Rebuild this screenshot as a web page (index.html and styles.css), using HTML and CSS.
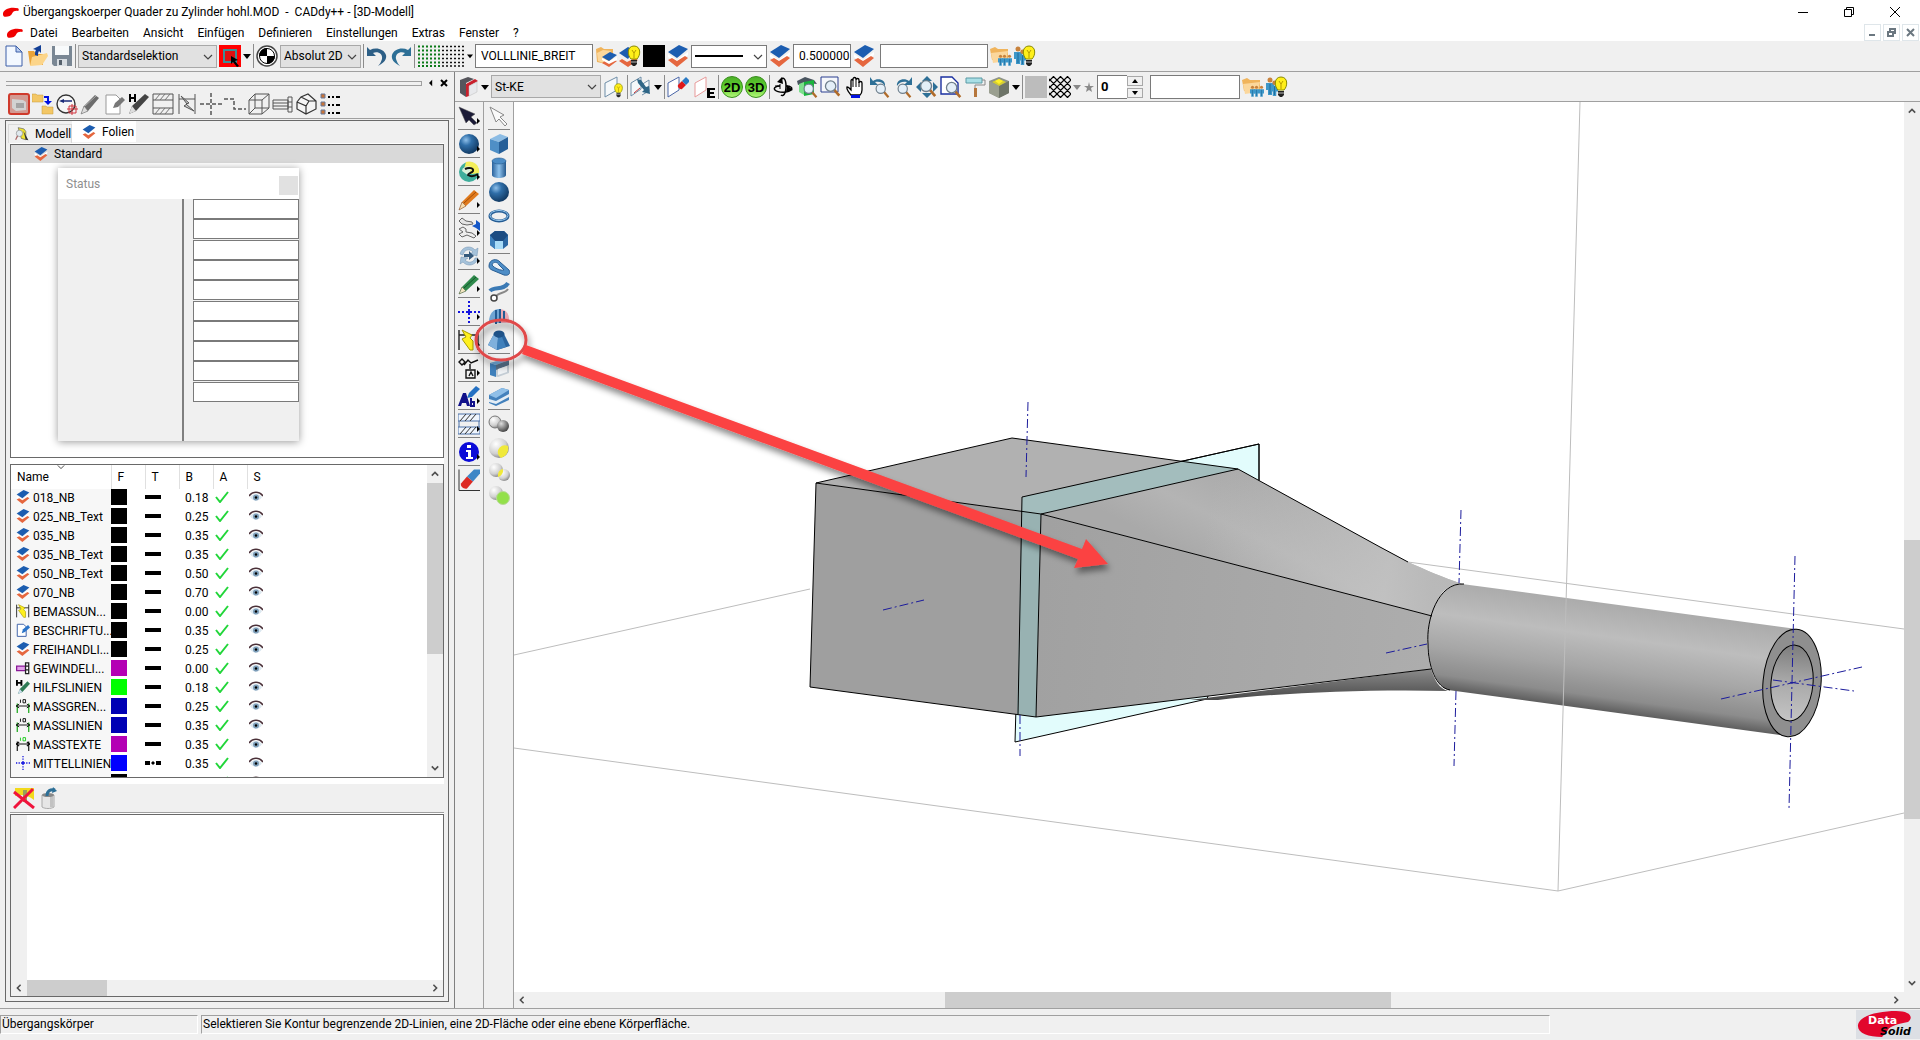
FILE: index.html
```html
<!DOCTYPE html>
<html lang="de">

<head>
    <meta charset="UTF-8">
    <meta name="viewport" content="width=device-width, initial-scale=1.0">
    <title>CADdy++ - [3D-Modell]</title>
    <link rel="stylesheet" href="styles.css">
</head>

<body>

    <!-- Symbole -->
    <svg class="symbols" aria-hidden="true">
        <defs>
            <radialGradient id="gBall" cx="0.35" cy="0.3" r="0.8">
                <stop offset="0" stop-color="#8fc0ea" /><stop offset="0.35" stop-color="#2f6ea8" /><stop offset="1" stop-color="#0c2f55" />
            </radialGradient>
            <radialGradient id="gGrey" cx="0.35" cy="0.3" r="0.8">
                <stop offset="0" stop-color="#fff" /><stop offset="0.6" stop-color="#d0d0d0" /><stop offset="1" stop-color="#777" />
            </radialGradient>
            <radialGradient id="gDark" cx="0.35" cy="0.3" r="0.8">
                <stop offset="0" stop-color="#ddd" /><stop offset="0.5" stop-color="#888" /><stop offset="1" stop-color="#333" />
            </radialGradient>
            <linearGradient id="gBlue" x1="0" x2="1" y1="0" y2="0">
                <stop offset="0" stop-color="#2a629c" /><stop offset="0.5" stop-color="#8fc3ee" /><stop offset="1" stop-color="#23578c" />
            </linearGradient>
            <linearGradient id="gGreen" x1="0" x2="0" y1="0" y2="1">
                <stop offset="0" stop-color="#4cae2a" /><stop offset="0.5" stop-color="#5fd02c" /><stop offset="1" stop-color="#b5f67c" />
            </linearGradient>
        </defs>

        <symbol id="brand" viewBox="0 0 18 12"><path d="M1 8C1 3 9 0 17 2c1 1 1 2 0 3-2-1-5 0-6 2-1 3-4 4-7 4-2 0-3-1-3-3z" fill="#f00000" /></symbol>
        <symbol id="down" viewBox="0 0 8 22"><path d="M0 9h8l-4 5z" /></symbol>
        <symbol id="chev" viewBox="0 0 10 10"><path d="M1 3l4 4 4-4" fill="none" stroke="#444" stroke-width="1.2" /></symbol>
        <symbol id="arrow" viewBox="0 0 10 10"><path d="M1 7l4-4 4 4" fill="none" stroke="#505050" stroke-width="2" /></symbol>

        <!-- Standardleiste -->
        <symbol id="new" viewBox="0 0 22 22"><path d="M3 1h10l6 6v14H3z" fill="#f3f8ff" stroke="#3c5fa8" /><path d="M13 1v6h6z" fill="#b9cdf0" stroke="#3c5fa8" /></symbol>
        <symbol id="open" viewBox="0 0 22 22"><path d="M1 6h6l2 3h7v11H3z" fill="#e8a33a" /><path d="M5 12l15-4 1 3-6 9-12 1z" fill="#fcd58a" /><path d="M8 10c0-2 0-4 1-5L6 4l8-4v8l-2-2c-1 1-1 3-1 5z" fill="#123f96" /></symbol>
        <symbol id="save" viewBox="0 0 22 22"><path d="M1 1h20v20H3l-2-2z" fill="#7a8794" /><path d="M4 1h14v9H4z" fill="#f8fafb" /><path d="M6 14h10v7H6z" fill="#d8dde2" /><path d="M8 15h3v5H8z" fill="#56616c" /></symbol>
        <symbol id="pick" viewBox="0 0 22 22"><path d="M0 0h22v22H0z" fill="#f00" /><path d="M5 5h12v12H5z" fill="#e01010" stroke="#3c8f95" stroke-width="2" /><path d="M12 11l7 4-3 1 4 5-2 1-4-5-2 2z" /></symbol>
        <symbol id="origin" viewBox="0 0 22 22"><circle cx="11" cy="11" r="10" fill="#fff" stroke="#444" stroke-width="1.5" /><circle cx="11" cy="11" r="7.500" fill="#fff" stroke="#000" /><path d="M11 3a8 8 0 0 0-8 8h16a8 8 0 0 1-8 8z" /></symbol>
        <symbol id="undo" viewBox="0 0 22 22"><path d="M1 2v9h9L7 8c5-2 10 1 9 6-1 3-2 5-4 7 6-3 9-7 8-11C18 4 10 2 4 5z" fill="#2d5f86" /></symbol>
        <symbol id="redo" viewBox="0 0 22 22"><path d="M21 2v9h-9l3-3c-5-2-10 1-9 6 1 3 2 5 4 7-6-3-9-7-8-11C4 4 12 2 18 5z" fill="#2d6f96" /></symbol>
        <symbol id="grids" viewBox="0 0 48 22"><path d="M1 1.500h23M1 5.500h23M1 9.500h23M1 13.500h23M1 17.500h23M1 21h23" stroke="#0a7a18" stroke-width="2" stroke-dasharray="2 2" /><path d="M25 1.500h22M25 5.500h22M25 9.500h22M25 13.500h22M25 17.500h22M25 21h22" stroke="#111" stroke-dasharray="2 2" stroke-width="1.500" /></symbol>
        <symbol id="layers" viewBox="0 0 22 22"><path d="M1 9l9 6L21 7v3l-11 9L1 12z" fill="#fff" /><path d="M1 15l4-2 5 3 8-5 3 2-11 9z" fill="#e5673f" /><path d="M1 7l11-7 9 4-11 9z" fill="#1c5db0" /></symbol>
        <symbol id="foldlayers" viewBox="0 0 22 22"><path d="M1 4l5-2 3 2h9v9l-7 6-9-2z" fill="#f0b45c" /><path d="M2 8l6-3 8 1-8 12-5-2z" fill="#fbd79c" /><path d="M7 18l3-2 4 2 5-3 3 1-8 6z" fill="#e5673f" /><path d="M7 13l7 3 8-4v3l-8 4-7-4z" fill="#fff" /><path d="M7 12l8-5 7 3-8 6z" fill="#1c5db0" /></symbol>
        <symbol id="bulb" viewBox="0 0 14 22"><path d="M4 14C0 10 0 1 7 1s7 9 3 13z" fill="#ffef1a" stroke="#8a8a00" /><path d="M5 5l2 3 2-3M7 8v5" fill="none" stroke="#b59a00" /><path d="M4 15h6v4l-2 2H6l-2-2z" fill="#222" /><path d="M4 17h6" stroke="#bbb" /></symbol>
        <symbol id="layerbulb" viewBox="0 0 22 22"><path d="M0 16l3-2 5 3 8-4 3 2-10 7z" fill="#e5673f" /><path d="M0 8l9-6 6 3-6 9z" fill="#1c5db0" /><use href="#bulb" x="8" width="14" height="22" /></symbol>
        <symbol id="man" viewBox="0 0 8 18"><circle cx="4" cy="3" r="2.500" fill="#c8823c" /><path d="M0 6h8v7H6v5H2v-5H0z" fill="#3d97c9" /><path d="M4 7v10" stroke="#1d6a9a" /></symbol>
        <symbol id="foldmen" viewBox="0 0 22 22"><path d="M0 4l5-2 3 2h10v11H2z" fill="#f0b45c" /><path d="M1 8l17-2-2 10-13 2z" fill="#fbd79c" /><use href="#man" x="8" y="9" width="5" height="12" /><use href="#man" x="12" y="9" width="5" height="12" /><use href="#man" x="17" y="9" width="5" height="12" /></symbol>
        <symbol id="menbulb" viewBox="0 0 22 22"><use href="#man" x="0" y="1" width="8" height="18" /><use href="#man" x="5" y="4" width="7" height="16" /><use href="#bulb" x="8" width="14" height="22" /></symbol>

        <!-- 3D-Leiste -->
        <symbol id="bookred" viewBox="0 0 22 22"><path d="M3 4l8-3 6 2-8 4v14l-6-4z" fill="#55555c" /><path d="M9 8l9-5 3 2-9 5v10l-3 1z" fill="#c9202c" /><path d="M12 10l8-4v10l-8 4z" fill="#e8e9ec" stroke="#bbb" stroke-width=".5" /></symbol>
        <symbol id="sheet" viewBox="0 0 22 22"><path d="M2 7l9-6v13l-9 7z" fill="#f5f8fa" stroke="#6f8ea8" /></symbol>
        <symbol id="sheetbulb" viewBox="0 0 22 22"><path d="M2 7l12-6v13l-12 7z" fill="#f5f8fa" stroke="#6f8ea8" /><use href="#bulb" x="10" y="7" width="11" height="15" /></symbol>
        <symbol id="sheetarrow" viewBox="0 0 22 22"><path d="M1 7l10-6v12l-10 7zM11 9l8-5v11l-7 4" fill="#f5f8fa" stroke="#6f8ea8" /><path d="M4 17l6-5" stroke="#c33" /><path d="M7 3l4 1 5 7 3-1 1 8-8-2 2-2-6-7z" fill="#2f6687" /></symbol>
        <symbol id="sheeterase" viewBox="0 0 22 22"><path d="M1 7l11-6v13l-11 7z" fill="#fff" stroke="#4a66a8" /><path d="M11 9l4-4 4 4-4 4c-2 1-5-2-4-4z" fill="#e0191b" /><path d="M15 5l4-4 3 3v2l-3 3z" fill="#2b7ac4" /></symbol>
        <symbol id="sheete" viewBox="0 0 22 22"><path d="M1 7l11-6v13l-11 7z" fill="#fff" stroke="#e89a9a" /><path d="M13 12h8v2h-5v2h4v2h-4v2h5v2h-8z" /></symbol>
        <symbol id="disc" viewBox="0 0 22 22"><circle cx="11" cy="11" r="10.500" fill="url(#gGreen)" stroke="#3a8f1f" /></symbol>
        <symbol id="orbit" viewBox="0 0 22 22"><path d="M14 10c5 0 7 2 5 4-3 3-13 3-16 0-2-2 1-4 5-4" fill="none" stroke="#000" stroke-width="1.5" /><path d="M9 4c2-4 5-1 5 6 0 8-3 11-5 9" fill="none" stroke="#000" stroke-width="1.500" /><path d="M10 1L5 6l6 2zM15 9l6 5-7 2z" /><path d="M8 10H3M8 8v5" stroke="#000" /></symbol>
        <symbol id="lens" viewBox="0 0 22 22"><path d="M14 14l6 7" stroke="#b06b2a" stroke-width="3" /><circle cx="10" cy="10" r="6" fill="#e4eff8" stroke="#6f7f8c" stroke-width="1.5" /></symbol>
        <symbol id="houselens" viewBox="0 0 22 22"><path d="M1 5l8-4 9 3 3 4-11-1-8 2z" fill="#4a5560" /><path d="M3 8l5-2v13l-5-3z" fill="#7de08c" /><path d="M8 6l10-2v14l-10 2z" fill="#18b43c" /><use href="#lens" x="5" y="5" width="17" height="17" /></symbol>
        <symbol id="winlens" viewBox="0 0 22 22"><path d="M1 1h17v15H1z" fill="#f5f7fb" stroke="#2a3e90" /><use href="#lens" x="2" y="1" width="19" height="20" /></symbol>
        <symbol id="hand" viewBox="0 0 22 22"><path d="M7 19C4 15 2 13 3 11c2 0 2 1 4 3V5c0-2 2-2 2 0V3c0-2 3-2 3 0v1c0-2 3-2 3 0v3c0-2 3-2 3 0v7c0 3-1 4-2 5z" fill="#fff" stroke="#000" stroke-width="1.3" /><path d="M9 5v6M12 4v7M15 6v5" stroke="#000" /><path d="M7 19h9v3H7z" fill="#0010e0" /></symbol>
        <symbol id="lensback" viewBox="0 0 22 22"><use href="#lens" x="5" y="5" width="17" height="17" /><path d="M2 1v8h8L7 6c4-1 8 0 10 4 1-6-7-9-12-5z" fill="#2d6f96" /></symbol>
        <symbol id="lensfwd" viewBox="0 0 22 22"><use href="#lens" x="3" y="5" width="17" height="17" /><path d="M20 1v8h-8l3-3c-4-1-8 0-10 4C4 4 12 1 17 5z" fill="#2d6f96" /></symbol>
        <symbol id="lensall" viewBox="0 0 22 22"><path d="M6 5l5-5 5 5zM6 17l5 5 5-5zM5 6l-5 5 5 5zM17 6l5 5-5 5z" fill="#2d6f96" /><use href="#lens" x="1" y="1" width="20" height="20" /></symbol>
        <symbol id="pagelens" viewBox="0 0 22 22"><path d="M1 1h11l6 6v11H1z" fill="#fff" stroke="#1a2fa0" stroke-width="1.4" /><use href="#lens" x="3" y="3" width="19" height="19" /></symbol>
        <symbol id="roller" viewBox="0 0 22 22"><path d="M2 2h16v5H2z" fill="#a9dfe6" stroke="#5a9aa5" /><path d="M18 4h3v5H11v4" fill="none" stroke="#888" /><path d="M10 12h3v9h-3z" fill="#b5763c" /></symbol>
        <symbol id="cubegold" viewBox="0 0 22 22"><path d="M1 5l10-4 10 4v12l-10 5-10-5z" fill="#8f9488" /><path d="M11 10l10-5v12l-10 5z" fill="#6e7468" /><path d="M4 6l7-3 7 3-7 4z" fill="#d6cf30" /><path d="M7 5l4-2 4 2-4 3z" fill="#fff22a" /><path d="M1 5l10 5v12L1 17z" fill="#9a9f90" /></symbol>
        <symbol id="hatch" viewBox="0 0 22 22"><path d="M0 5l5-5M0 12L12 0M0 19L19 0M4 22L22 4M11 22l11-11M18 22l4-4M0 17l5 5M0 10l12 12M0 3l19 19M4 0l18 18M11 0l11 11M18 0l4 4" stroke="#000" stroke-width="1.2" /></symbol>
        <symbol id="star" viewBox="0 0 12 22"><path d="M6 6l1 4h4l-3 2 1 4-3-2-3 2 1-4-3-2h4z" fill="#8a8a8a" /></symbol>

        <!-- Filterleiste -->
        <symbol id="fview" viewBox="0 0 22 22"><rect x="1" y="1" width="20" height="20" rx="2" fill="#d39a92" stroke="#cf3a2c" stroke-width="2" /><path d="M4 6l11 1 3 2v8l-10 1-4-3z" fill="#d2d2d2" /><path d="M8 10h8v5H8z" fill="#a4a4a4" /></symbol>
        <symbol id="ffolder" viewBox="0 0 22 22"><path d="M0 1h4l1 1h6v7H0z" fill="#f3c766" stroke="#c79a3a" stroke-width=".5" /><path d="M10 13h4l1 1h6v7H10z" fill="#f3c766" stroke="#c79a3a" stroke-width=".5" /><path d="M12 4h4v6" fill="none" stroke="#0010e0" stroke-width="2" /><path d="M12 8l4 4 4-4z" fill="#0010e0" /></symbol>
        <symbol id="fcircle" viewBox="0 0 22 22"><circle cx="10" cy="11" r="9" fill="#f7f7f7" stroke="#333" stroke-width="1.400" /><path d="M6 8h10" stroke="#1b2a78" stroke-width="1.500" /><path d="M3 8l5-2v4z" fill="#1b2a78" /><path d="M13 13h7v7h-7zM16 11v11M11 16h11" fill="none" stroke="#d0323c" /></symbol>
        <symbol id="fpencil" viewBox="0 0 22 22"><path d="M1 21l3-8L15 2l4 3L8 18z" fill="#6c6c6c" /><path d="M1 21l3-8 4 5z" fill="#ddd" stroke="#777" stroke-width=".6" /><path d="M5 13L16 3" stroke="#aaa" /></symbol>
        <symbol id="fnote" viewBox="0 0 22 22"><path d="M2 2h10l4 4v15H2z" fill="#fff" stroke="#999" /><path d="M9 15l2-5 7-6 3 3-7 7z" fill="#777" /></symbol>
        <symbol id="fhelp" viewBox="0 0 22 22"><path d="M1 21l3-8L17 1l4 3L8 18z" fill="#444" /><path d="M1 21l3-8 4 5z" fill="#ddd" /><path d="M1 1h2v3h3V1h2v8H6V6H3v3H1z" /></symbol>
        <symbol id="fhatch" viewBox="0 0 22 22"><path d="M1 1h20v6H1zM1 15h20v6H1zM1 7v8M21 7v8" fill="none" stroke="#555" /><path d="M3 7l5-6M8 7l5-6M13 7l5-6M3 21l5-6M8 21l5-6M13 21l5-6" stroke="#777" /></symbol>
        <symbol id="fdim" viewBox="0 0 22 22"><path d="M3 1v20M19 1v20M3 6h16" stroke="#555" /><path d="M5 3l8 7-3 1 8 7-10-5 3-2z" fill="#ccc" stroke="#555" /></symbol>
        <symbol id="faxis" viewBox="0 0 22 22"><path d="M11 0v22M0 11h22" stroke="#555" stroke-width="1.500" stroke-dasharray="4 2" /></symbol>
        <symbol id="fstep" viewBox="0 0 22 22"><path d="M0 6h10v10h12" fill="none" stroke="#555" stroke-width="1.500" stroke-dasharray="4 2" /></symbol>
        <symbol id="fwire" viewBox="0 0 22 22"><path d="M1 7h13v14H1zM7 1h14v14H7zM1 7l6-6M14 7l7-6M14 21l7-6M1 21l6-6" fill="none" stroke="#555" /></symbol>
        <symbol id="fbolt" viewBox="0 0 22 22"><path d="M1 7h15v9H1zM1 10h15M1 13h15M16 4h4v15h-4zM16 9h4M16 14h4" fill="none" stroke="#555" /></symbol>
        <symbol id="fprism" viewBox="0 0 22 22"><path d="M1 9l4-5 7-3 8 7v8l-10 5-9-5zM1 9l9 4v8M10 13l3-5 7 0M5 4l8 4" fill="#f4f4f4" stroke="#333" stroke-width="1.200" /></symbol>
        <symbol id="flist" viewBox="0 0 22 22"><path d="M1 1h4v4H1zM1 9h4v4H1zM1 17h4v4H1z" fill="#c87437" stroke="#66789a" /><path d="M8 4h14M8 12h14M8 20h14" stroke="#000" stroke-width="2" stroke-dasharray="2 2 2 2 4 2" /></symbol>

        <!-- Werkzeuge links -->
        <symbol id="tick" viewBox="0 0 22 22"><path d="M19 13l3 3-3 3z" /></symbol>
        <symbol id="cursor" viewBox="0 0 22 22"><path d="M1 2l16 7-4 3 6 6-3 2-5-5-3 3z" fill="#1c1c38" stroke="#555" stroke-width=".5" /></symbol>
        <symbol id="cursorw" viewBox="0 0 22 22"><path d="M2 2l14 8-4 2 7 7-2 2-6-7-3 3z" fill="#fafafa" stroke="#888" /></symbol>
        <symbol id="ball" viewBox="0 0 22 22"><circle cx="11" cy="11" r="10" fill="url(#gBall)" /></symbol>
        <symbol id="ring" viewBox="0 0 22 22"><circle cx="11" cy="11" r="10" fill="#3fae9c" /><path d="M8 1a10 10 0 0 1 13 11l-7 1L6 8z" fill="#f4ee5a" /><path d="M4 10a6 5 0 0 1 9-4l-2 9z" fill="#d8f0da" /><path d="M7 8c4-2 9-1 8 2-1 2-5 2-5 4 3 2 7 1 10-1" fill="none" stroke="#111" stroke-width="2" /></symbol>
        <symbol id="pencilo" viewBox="0 0 22 22"><path d="M1 21l3-8L16 1l5 4L8 17z" fill="#e07a1d" /><path d="M1 21l3-8 4 4z" fill="#f6dcae" stroke="#853" stroke-width=".6" /><path d="M6 14L18 3" stroke="#a34e06" /></symbol>
        <symbol id="tools" viewBox="0 0 22 22"><path d="M1 4l3-3 4 3 6 1 1 2-6 1-5-1z" fill="#e4e4e4" stroke="#666" /><path d="M1 12l4-2 3 2v3l6 1 4 3-2 2-7-3-5 2-3-3 4-2z" fill="#eee" stroke="#666" /><path d="M14 9l4-2v-4l4 3v8l-4-3z" fill="#1658c8" /></symbol>
        <symbol id="rotate" viewBox="0 0 22 22"><path d="M2 9C4 1 13 0 17 5l3-2-1 8-7-2 3-2C11 3 6 5 5 10zM20 13c-2 8-11 9-15 4l-3 2 1-7 7 1-3 2c4 4 9 2 10-2z" fill="#a5c2da" stroke="#6f8fae" stroke-width=".5" /><path d="M6 9h5V6l5 5-5 4v-3H6z" fill="#34597c" /></symbol>
        <symbol id="pencilg" viewBox="0 0 22 22"><path d="M1 21l3-7L16 2l5 4L8 18z" fill="#2f8a4c" /><path d="M1 21l3-7 4 4z" fill="#f2e4c0" stroke="#564" stroke-width=".6" /><path d="M6 15L18 4" stroke="#14572c" /></symbol>
        <symbol id="axis" viewBox="0 0 22 22"><path d="M11 0v22M0 11h22" stroke="#1414e0" stroke-width="2" stroke-dasharray="2 2" /><path d="M9 11h4M11 9v4" stroke="#1414e0" stroke-width="2" /></symbol>
        <symbol id="dim" viewBox="0 0 22 22"><path d="M1 1v20M20 1v20M1 6h19" stroke="#222" stroke-width="1.400" /><path d="M4 1l10 5-2 3 3 3v9h-3L4 10l4-2z" fill="#fff01e" stroke="#a89a00" /></symbol>
        <symbol id="weld" viewBox="0 0 22 22"><path d="M1 5l3-3 3 3-3 3zM6 8l4-5 3 3 7-3M12 7v5M8 13h9v8H8zM11 19l2-4 2 4" fill="none" stroke="#111" stroke-width="1.400" /></symbol>
        <symbol id="text" viewBox="0 0 22 22"><path d="M0 21L5 8h3l4 13H9l-1-3H4l-1 3z" fill="#10108a" /><path d="M13 13v8h3v-4h-3" fill="none" stroke="#10108a" stroke-width="2" /><path d="M9 13l2-5 7-7 4 3-8 8z" fill="#2470c2" /></symbol>
        <symbol id="hatchb" viewBox="0 0 22 22"><path d="M0 1h22v7H0zM0 14h22v7H0zM1 8v6M21 8v6" fill="#eef4fc" stroke="#4a70a8" /><path d="M2 8l6-7M7 8l6-7M12 8l6-7M2 21l6-7M7 21l6-7M12 21l6-7" stroke="#333" /></symbol>
        <symbol id="info" viewBox="0 0 22 22"><circle cx="11" cy="11" r="10" fill="#0a0ad8" /><path d="M9 4h4v3H9zM8 9h5v7h2v2H8v-2h2v-5H8z" fill="#fff" /></symbol>
        <symbol id="eraser" viewBox="0 0 22 22"><path d="M1 0v21h21" fill="none" stroke="#333" /><path d="M3 14l6-7 6 5-6 7c-3 1-7-2-6-5z" fill="#dd2a22" /><path d="M9 7l7-7h6v4l-7 8z" fill="#3d86c6" /></symbol>

        <!-- Werkzeuge rechts -->
        <symbol id="cube" viewBox="0 0 22 22"><path d="M2 6l10-5 8 3-9 5z" fill="#8cbce4" /><path d="M2 6l9 3v12l-9-4z" fill="#4f8fc6" /><path d="M11 9l9-5v12l-9 5z" fill="#265f98" /></symbol>
        <symbol id="cyl" viewBox="0 0 22 22"><path d="M4 4v14c0 4 14 4 14 0V4z" fill="url(#gBlue)" /><ellipse cx="11" cy="4" rx="7" ry="3" fill="#4b8cc6" stroke="#235a90" stroke-width=".6" /></symbol>
        <symbol id="torus" viewBox="0 0 22 22"><ellipse cx="11" cy="11" rx="9" ry="5" fill="none" stroke="#245c94" stroke-width="3" /><ellipse cx="11" cy="10.500" rx="9" ry="5" fill="none" stroke="#9cccf0" stroke-width="1" /></symbol>
        <symbol id="hexa" viewBox="0 0 22 22"><path d="M2 6l5-4h9l4 4v10l-5 4H7l-5-4z" fill="#2c68a4" /><path d="M2 6l5 5v9l-5-4z" fill="#3d7fbb" /><path d="M7 12h8v8H7z" fill="#a9dcf8" /><path d="M2 6l5-4h9l4 4-5 6H7z" fill="#1c4c82" /></symbol>
        <symbol id="sweep" viewBox="0 0 22 22"><path d="M1 9c0-7 8-8 11-4l9 8c2 4-1 6-5 5L4 13c-2-1-3-2-3-4z" fill="#4d8dc7" stroke="#2a5f94" /><path d="M4 8c1-4 6-3 7 0l5 5c-3 1-10-2-12-5z" fill="#eef3f8" stroke="#2a5f94" /></symbol>
        <symbol id="pipe" viewBox="0 0 22 22"><path d="M2 10c4-5 14 0 18-8" fill="none" stroke="#3b7ab5" stroke-width="4" /><path d="M8 16c1-5 9-3 12-8" fill="none" stroke="#888" stroke-width="2" /><circle cx="6" cy="17" r="3" fill="#fff" stroke="#444" stroke-width="1.500" /></symbol>
        <symbol id="cut" viewBox="0 0 22 22"><path d="M1 17c0-9 5-13 10-13v14z" fill="#6fa5d4" /><path d="M11 4c6 0 10 4 10 10v4H11z" fill="#e9a9b4" /><path d="M8 5v14M12 4v14M16 6v8" stroke="#245c94" stroke-width="2" /></symbol>
        <symbol id="loft" viewBox="0 0 22 22"><path d="M6 5L0 16l9 5 13-4-6-12z" fill="#2b659e" /><path d="M6 5L0 16l9 5 1-12z" fill="#7fb0dc" /><path d="M10 9l-1 12 9-3-4-10z" fill="#3f80bb" /><ellipse cx="11" cy="5" rx="5.500" ry="3.500" fill="#1f5389" /></symbol>
        <symbol id="shell" viewBox="0 0 22 22"><path d="M2 6l14-4 5 1v13l-11 4-8-2z" fill="#c4cdd5" /><path d="M2 6l6 2v12l-6-2z" fill="#3f80bb" /><path d="M2 6l14-4 5 1-13 5z" fill="#6fa7d6" /><path d="M8 8l13-5v5L8 13z" fill="#56708a" /><path d="M10 18V12l9-3v6z" fill="#f0f3f6" /></symbol>
        <symbol id="slab" viewBox="0 0 22 22"><path d="M1 10L14 3l7 2v10L8 21l-7-3z" fill="#4381bc" /><path d="M1 10L14 3l7 2L8 13z" fill="#8fbfe8" /><path d="M1 14l7 2 13-7v3L8 19l-7-2z" fill="#e4edf5" /></symbol>
        <symbol id="union" viewBox="0 0 22 22"><circle cx="7" cy="9" r="6" fill="url(#gGrey)" stroke="#777" /><circle cx="15" cy="13" r="6" fill="url(#gDark)" /></symbol>
        <symbol id="minus" viewBox="0 0 22 22"><circle cx="11" cy="11" r="10" fill="url(#gGrey)" /><path d="M11 19a7 7 0 0 1 9-10 10 10 0 0 1-7 12z" fill="#f0e93a" /></symbol>
        <symbol id="inter" viewBox="0 0 22 22"><circle cx="8" cy="9" r="7" fill="url(#gGrey)" /><circle cx="16" cy="14" r="6" fill="url(#gGrey)" /><path d="M10 14a6 6 0 0 1 5-6 7 7 0 0 1-5 8z" fill="#f0e93a" /></symbol>
        <symbol id="add" viewBox="0 0 22 22"><circle cx="8" cy="8" r="7" fill="url(#gGrey)" /><circle cx="15" cy="13" r="6.500" fill="#93e04a" stroke="#b9d99a" /></symbol>

        <!-- Folien -->
        <symbol id="lnote" viewBox="0 0 22 22"><path d="M2 2h10l4 4v15H2z" fill="#fff" stroke="#3c5fa8" stroke-width="1.500" /><path d="M9 16l2-6 8-7 3 4-8 7z" fill="#2c74c8" /></symbol>
        <symbol id="lbolt" viewBox="0 0 22 22"><path d="M1 8h14v7H1z" fill="#e3a0ea" stroke="#8a1a98" stroke-width="2" /><path d="M15 3h5v17h-5zM15 8h5M15 14h5" fill="#fff" stroke="#222" stroke-width="2" /></symbol>
        <symbol id="lhelp" viewBox="0 0 22 22"><path d="M3 22l3-8L18 2l4 4-12 13z" fill="#2f7a55" /><path d="M3 22l3-8 4 5z" fill="#cde" /><path d="M0 0h3v3h4V0h3v9H7V6H3v3H0z" /></symbol>
        <symbol id="lmass" viewBox="0 0 22 22"><path d="M2 7v15M20 7v15" stroke="#2a2" stroke-width="2" /><path d="M5 8l-5 3 5 3M17 8l5 3-5 3M2 11h18" fill="none" stroke="#111" stroke-width="1.500" /><path d="M7 1v5M11 1v5h4V1z" fill="none" stroke="#111" stroke-width="1.500" /></symbol>
        <symbol id="lmasst" viewBox="0 0 22 22"><path d="M2 7v15M20 7v15M2 11h18M5 8l-5 3 5 3M17 8l5 3-5 3" fill="none" stroke="#111" stroke-width="1.800" /><path d="M7 1v5M11 1v5h4V1z" fill="none" stroke="#2c2" stroke-width="1.500" /></symbol>
        <symbol id="model" viewBox="0 0 22 22"><path d="M5 1l9 2 3 4v13l-7-2z" fill="#f1e430" stroke="#555" /><path d="M13 6l4 14 4 1-2-4z" fill="#333" /><circle cx="7" cy="10" r="5" fill="#dfe8ee" stroke="#888" /><path d="M4 14l-3 6" stroke="#a66" stroke-width="2" /></symbol>
        <symbol id="solid" viewBox="0 0 16 4"><path d="M0 0h16v4H0z" /></symbol>
        <symbol id="dashdot" viewBox="0 0 16 4"><path d="M0 0h5v4H0zM6 2l2-2 2 2-2 2zM11 0h5v4h-5z" /></symbol>
        <symbol id="check" viewBox="0 0 14 12"><path d="M1 6l4 5 8-10" fill="none" stroke="#22d63a" stroke-width="2" /></symbol>
        <symbol id="eye" viewBox="0 0 14 12"><path d="M1 6c3-4 9-4 12 0-3 5-9 5-12 0z" fill="#dce8f0" /><circle cx="7" cy="6.500" r="3" fill="#7c9db8" /><circle cx="7" cy="6.500" r="1.200" /><path d="M0 5c4-5 10-5 14 0" fill="none" stroke="#4a3038" stroke-width="1.600" /></symbol>
        <symbol id="frame" viewBox="0 0 22 22"><path d="M1 1h20v20H1z" fill="#eee" stroke="#444" stroke-width="2" /></symbol>
        <symbol id="purge" viewBox="0 0 22 22"><path d="M2 1h19v12c-6-5-13-6-19-4z" fill="#f2d91c" /><path d="M10 3h4v12h-4z" fill="#98a05a" /><path d="M1 5l20 16M20 2L1 21" stroke="#f0143c" stroke-width="3" /></symbol>
        <symbol id="bin" viewBox="0 0 22 22"><path d="M3 8h12v12c-3 2-9 2-12 0z" fill="#e6e6e6" stroke="#aaa" /><path d="M11 9h3v11h-3z" fill="#c2c2c2" /><ellipse cx="9" cy="8" rx="6" ry="2" fill="#888" /><path d="M8 9c0-5 3-7 8-6" fill="none" stroke="#2d6f96" stroke-width="3" /><path d="M14 0l4 4-5 2z" fill="#2d6f96" /></symbol>
    </svg>

    <!-- Titelleiste -->
    <header class="titlebar">
        <svg class="brand"><use href="#brand" /></svg>
        <h1>Übergangskoerper Quader zu Zylinder hohl.MOD &nbsp;-&nbsp; CADdy++ - [3D-Modell]</h1>
        <div class="window-buttons">
            <button aria-label="Minimieren"><svg viewBox="0 0 12 12"><path d="M1 6.500h10" /></svg></button>
            <button aria-label="Verkleinern"><svg viewBox="0 0 12 12"><path d="M1.500 3.500h7v7h-7zM3.500 3.500v-2h7v7h-2" /></svg></button>
            <button aria-label="Schließen"><svg viewBox="0 0 12 12"><path d="M1 1l10 10M11 1L1 11" /></svg></button>
        </div>
    </header>

    <!-- Menü -->
    <nav class="menubar">
        <svg class="brand"><use href="#brand" /></svg>
        <a href="#">Datei</a>
        <a href="#">Bearbeiten</a>
        <a href="#">Ansicht</a>
        <a href="#">Einfügen</a>
        <a href="#">Definieren</a>
        <a href="#">Einstellungen</a>
        <a href="#">Extras</a>
        <a href="#">Fenster</a>
        <a href="#">?</a>
        <div class="mdi-buttons">
            <button aria-label="Dokument minimieren"><svg viewBox="0 0 9 9"><path d="M1 7h6" /></svg></button>
            <button aria-label="Dokument verkleinern"><svg viewBox="0 0 9 9"><path d="M1 4h5v4H1zM3 4V1h5v4H6" /></svg></button>
            <button aria-label="Dokument schließen"><svg viewBox="0 0 9 9"><path d="M1 1l7 7M8 1L1 8" /></svg></button>
        </div>
    </nav>

    <!-- Standardleiste -->
    <div class="toolbar">
        <button class="tool" aria-label="Neu"><svg><use href="#new" /></svg></button>
        <button class="tool" aria-label="Öffnen"><svg><use href="#open" /></svg></button>
        <button class="tool" aria-label="Speichern"><svg><use href="#save" /></svg></button>
        <span class="sep"></span>
        <span class="combo selection"><select aria-label="Selektion"><option>Standardselektion</option></select><svg><use href="#chev" /></svg></span>
        <button class="tool" aria-label="Auswahl"><svg><use href="#pick" /></svg></button>
        <button class="drop" aria-label="Auswahl Optionen"><svg><use href="#down" /></svg></button>
        <span class="sep"></span>
        <button class="tool" aria-label="Ursprung"><svg><use href="#origin" /></svg></button>
        <span class="combo coords"><select aria-label="Koordinaten"><option>Absolut 2D</option></select><svg><use href="#chev" /></svg></span>
        <span class="sep"></span>
        <button class="tool" aria-label="Rückgängig"><svg><use href="#undo" /></svg></button>
        <button class="tool" aria-label="Wiederherstellen"><svg><use href="#redo" /></svg></button>
        <span class="sep"></span>
        <button class="tool wide" aria-label="Raster"><svg><use href="#grids" /></svg></button>
        <button class="drop small" aria-label="Raster Optionen"><svg><use href="#down" /></svg></button>
        <input class="field layer-name" type="text" value="VOLLLINIE_BREIT" aria-label="Folie">
        <button class="tool" aria-label="Folie wählen"><svg><use href="#foldlayers" /></svg></button>
        <button class="tool" aria-label="Folie anzeigen"><svg><use href="#layerbulb" /></svg></button>
        <button class="tool black" aria-label="Farbe"></button>
        <button class="tool" aria-label="Farbe aus Folie"><svg><use href="#layers" /></svg></button>
        <span class="combo line-type"><select aria-label="Linientyp"><option></option></select><i></i><svg><use href="#chev" /></svg></span>
        <button class="tool" aria-label="Linientyp aus Folie"><svg><use href="#layers" /></svg></button>
        <input class="field line-width" type="text" value="0.500000" aria-label="Linienbreite">
        <button class="tool" aria-label="Breite aus Folie"><svg><use href="#layers" /></svg></button>
        <input class="field group spaced" type="text" aria-label="Gruppe">
        <button class="tool" aria-label="Gruppe wählen"><svg><use href="#foldmen" /></svg></button>
        <button class="tool" aria-label="Gruppe anzeigen"><svg><use href="#menbulb" /></svg></button>
    </div>

    <div class="workspace">

        <!-- Linkes Panel -->
        <aside class="side">
            <div class="grip">
                <span></span>
                <button aria-label="Andocken"><svg class="dock" viewBox="0 0 5 8"><path d="M4 0v8L0 4z" /></svg></button>
                <button aria-label="Panel schließen"><svg viewBox="0 0 8 8"><path d="M1 1l6 6M7 1L1 7" stroke="#000" stroke-width="2" /></svg></button>
            </div>
            <div class="filters">
                <button class="tool" aria-label="Ansichten"><svg><use href="#fview" /></svg></button>
                <button class="tool" aria-label="Ordner"><svg><use href="#ffolder" /></svg></button>
                <button class="tool" aria-label="Kreise"><svg><use href="#fcircle" /></svg></button>
                <button class="tool" aria-label="Linien"><svg><use href="#fpencil" /></svg></button>
                <button class="tool" aria-label="Notizen"><svg><use href="#fnote" /></svg></button>
                <button class="tool" aria-label="Hilfslinien"><svg><use href="#fhelp" /></svg></button>
                <button class="tool" aria-label="Schraffuren"><svg><use href="#fhatch" /></svg></button>
                <button class="tool" aria-label="Bemaßungen"><svg><use href="#fdim" /></svg></button>
                <button class="tool" aria-label="Mittellinien"><svg><use href="#faxis" /></svg></button>
                <button class="tool" aria-label="Schnittverlauf"><svg><use href="#fstep" /></svg></button>
                <button class="tool" aria-label="Drahtmodell"><svg><use href="#fwire" /></svg></button>
                <button class="tool" aria-label="Normteile"><svg><use href="#fbolt" /></svg></button>
                <button class="tool" aria-label="Körper"><svg><use href="#fprism" /></svg></button>
                <button class="tool" aria-label="Liste"><svg><use href="#flist" /></svg></button>
            </div>

            <div class="panel">
                <div class="tabs">
                    <button class="tab"><svg><use href="#model" /></svg>Modell</button>
                    <button class="tab active"><svg><use href="#layers" /></svg>Folien</button>
                </div>

                <div class="panes">
                    <div class="tree">
                        <div class="tree-item"><svg><use href="#layers" /></svg>Standard</div>

                        <!-- Schwebendes Statusfenster -->
                        <div class="status-window">
                            <div class="status-title">Status<button aria-label="Status schließen"></button></div>
                            <div class="status-body">
                                <div class="status-names"></div>
                                <div class="status-values">
                                    <input type="text" aria-label="Wert 1">
                                    <input type="text" aria-label="Wert 2">
                                    <input type="text" aria-label="Wert 3">
                                    <input type="text" aria-label="Wert 4">
                                    <input type="text" aria-label="Wert 5">
                                    <input type="text" aria-label="Wert 6">
                                    <input type="text" aria-label="Wert 7">
                                    <input type="text" aria-label="Wert 8">
                                    <input type="text" aria-label="Wert 9">
                                    <input type="text" aria-label="Wert 10">
                                </div>
                            </div>
                        </div>
                    </div>

                    <div class="layer-list">
                        <div class="layer-scroll">
                            <table>
                                <thead>
                                    <tr><th class="name">Name<svg><use href="#chev" /></svg></th><th>F</th><th>T</th><th>B</th><th>A</th><th>S</th></tr>
                                </thead>
                                <tbody>
                                    <tr><td><svg class="ico"><use href="#layers" /></svg>018_NB</td><td class="black"></td><td><svg class="ln"><use href="#solid" /></svg></td><td>0.18</td><td><svg class="st"><use href="#check" /></svg></td><td><svg class="st"><use href="#eye" /></svg></td></tr>
                                    <tr><td><svg class="ico"><use href="#layers" /></svg>025_NB_Text</td><td class="black"></td><td><svg class="ln"><use href="#solid" /></svg></td><td>0.25</td><td><svg class="st"><use href="#check" /></svg></td><td><svg class="st"><use href="#eye" /></svg></td></tr>
                                    <tr><td><svg class="ico"><use href="#layers" /></svg>035_NB</td><td class="black"></td><td><svg class="ln"><use href="#solid" /></svg></td><td>0.35</td><td><svg class="st"><use href="#check" /></svg></td><td><svg class="st"><use href="#eye" /></svg></td></tr>
                                    <tr><td><svg class="ico"><use href="#layers" /></svg>035_NB_Text</td><td class="black"></td><td><svg class="ln"><use href="#solid" /></svg></td><td>0.35</td><td><svg class="st"><use href="#check" /></svg></td><td><svg class="st"><use href="#eye" /></svg></td></tr>
                                    <tr><td><svg class="ico"><use href="#layers" /></svg>050_NB_Text</td><td class="black"></td><td><svg class="ln"><use href="#solid" /></svg></td><td>0.50</td><td><svg class="st"><use href="#check" /></svg></td><td><svg class="st"><use href="#eye" /></svg></td></tr>
                                    <tr><td><svg class="ico"><use href="#layers" /></svg>070_NB</td><td class="black"></td><td><svg class="ln"><use href="#solid" /></svg></td><td>0.70</td><td><svg class="st"><use href="#check" /></svg></td><td><svg class="st"><use href="#eye" /></svg></td></tr>
                                    <tr><td><svg class="ico"><use href="#dim" /></svg>BEMASSUN...</td><td class="black"></td><td><svg class="ln"><use href="#solid" /></svg></td><td>0.00</td><td><svg class="st"><use href="#check" /></svg></td><td><svg class="st"><use href="#eye" /></svg></td></tr>
                                    <tr><td><svg class="ico"><use href="#lnote" /></svg>BESCHRIFTU...</td><td class="black"></td><td><svg class="ln"><use href="#solid" /></svg></td><td>0.35</td><td><svg class="st"><use href="#check" /></svg></td><td><svg class="st"><use href="#eye" /></svg></td></tr>
                                    <tr><td><svg class="ico"><use href="#layers" /></svg>FREIHANDLI...</td><td class="black"></td><td><svg class="ln"><use href="#solid" /></svg></td><td>0.25</td><td><svg class="st"><use href="#check" /></svg></td><td><svg class="st"><use href="#eye" /></svg></td></tr>
                                    <tr><td><svg class="ico"><use href="#lbolt" /></svg>GEWINDELI...</td><td class="purple"></td><td><svg class="ln"><use href="#solid" /></svg></td><td>0.00</td><td><svg class="st"><use href="#check" /></svg></td><td><svg class="st"><use href="#eye" /></svg></td></tr>
                                    <tr><td><svg class="ico"><use href="#lhelp" /></svg>HILFSLINIEN</td><td class="green"></td><td><svg class="ln"><use href="#solid" /></svg></td><td>0.18</td><td><svg class="st"><use href="#check" /></svg></td><td><svg class="st"><use href="#eye" /></svg></td></tr>
                                    <tr><td><svg class="ico"><use href="#lmass" /></svg>MASSGREN...</td><td class="navy"></td><td><svg class="ln"><use href="#solid" /></svg></td><td>0.25</td><td><svg class="st"><use href="#check" /></svg></td><td><svg class="st"><use href="#eye" /></svg></td></tr>
                                    <tr><td><svg class="ico"><use href="#lmass" /></svg>MASSLINIEN</td><td class="navy"></td><td><svg class="ln"><use href="#solid" /></svg></td><td>0.35</td><td><svg class="st"><use href="#check" /></svg></td><td><svg class="st"><use href="#eye" /></svg></td></tr>
                                    <tr><td><svg class="ico"><use href="#lmasst" /></svg>MASSTEXTE</td><td class="purple"></td><td><svg class="ln"><use href="#solid" /></svg></td><td>0.35</td><td><svg class="st"><use href="#check" /></svg></td><td><svg class="st"><use href="#eye" /></svg></td></tr>
                                    <tr><td><svg class="ico"><use href="#axis" /></svg>MITTELLINIEN</td><td class="blue"></td><td><svg class="ln"><use href="#dashdot" /></svg></td><td>0.35</td><td><svg class="st"><use href="#check" /></svg></td><td><svg class="st"><use href="#eye" /></svg></td></tr>
                                    <tr><td><svg class="ico"><use href="#frame" /></svg></td><td class="black"></td><td></td><td></td><td><svg class="st"><use href="#check" /></svg></td><td><svg class="st"><use href="#eye" /></svg></td></tr>
                                </tbody>
                            </table>
                        </div>
                        <div class="vscroll">
                            <svg><use href="#arrow" /></svg>
                            <div class="track"><div class="thumb"></div></div>
                            <svg class="flip"><use href="#arrow" /></svg>
                        </div>
                    </div>

                    <div class="mini-bar">
                        <button class="tool" aria-label="Filter löschen"><svg><use href="#purge" /></svg></button>
                        <button class="tool" aria-label="Papierkorb"><svg><use href="#bin" /></svg></button>
                    </div>

                    <div class="output">
                        <div class="output-text"></div>
                        <div class="hscroll">
                            <svg class="left"><use href="#arrow" /></svg>
                            <div class="track"><div class="thumb"></div></div>
                            <svg class="right"><use href="#arrow" /></svg>
                        </div>
                    </div>
                </div>
            </div>
        </aside>

        <section class="document">

            <!-- 3D-Leiste -->
            <div class="toolbar view-bar">
                <button class="tool" aria-label="Darstellung"><svg><use href="#bookred" /></svg></button>
                <button class="drop" aria-label="Darstellung Optionen"><svg><use href="#down" /></svg></button>
                <span class="combo plane"><select aria-label="Konstruktionsebene"><option>St-KE</option></select><svg><use href="#chev" /></svg></span>
                <button class="tool" aria-label="Ebene anzeigen"><svg><use href="#sheetbulb" /></svg></button>
                <span class="sep"></span>
                <button class="tool" aria-label="Ebene verschieben"><svg><use href="#sheetarrow" /></svg></button>
                <button class="drop" aria-label="Ebene Optionen"><svg><use href="#down" /></svg></button>
                <span class="sep"></span>
                <button class="tool" aria-label="Ebene löschen"><svg><use href="#sheeterase" /></svg></button>
                <button class="tool spaced" aria-label="Ebene bearbeiten"><svg><use href="#sheete" /></svg></button>
                <span class="sep"></span>
                <button class="tool dim" aria-label="2D"><svg><use href="#disc" /></svg><b>2D</b></button>
                <button class="tool dim" aria-label="3D"><svg><use href="#disc" /></svg><b>3D</b></button>
                <span class="sep"></span>
                <button class="tool" aria-label="Drehen"><svg><use href="#orbit" /></svg></button>
                <button class="tool" aria-label="Ansicht wählen"><svg><use href="#houselens" /></svg></button>
                <button class="tool" aria-label="Fenster zoomen"><svg><use href="#winlens" /></svg></button>
                <button class="tool" aria-label="Verschieben"><svg><use href="#hand" /></svg></button>
                <button class="tool" aria-label="Zoom zurück"><svg><use href="#lensback" /></svg></button>
                <button class="tool" aria-label="Zoom vor"><svg><use href="#lensfwd" /></svg></button>
                <button class="tool" aria-label="Alles zoomen"><svg><use href="#lensall" /></svg></button>
                <button class="tool" aria-label="Blatt zoomen"><svg><use href="#pagelens" /></svg></button>
                <button class="tool" aria-label="Neu zeichnen"><svg><use href="#roller" /></svg></button>
                <button class="tool" aria-label="Schattierung"><svg><use href="#cubegold" /></svg></button>
                <button class="drop" aria-label="Schattierung Optionen"><svg><use href="#down" /></svg></button>
                <span class="sep"></span>
                <button class="tool grey" aria-label="Füllung"></button>
                <button class="tool" aria-label="Schraffur"><svg><use href="#hatch" /></svg></button>
                <button class="drop off" aria-label="Schraffur Optionen"><svg><use href="#down" /></svg></button>
                <svg class="star"><use href="#star" /></svg>
                <span class="spin">
                    <input class="field" type="text" value="0" aria-label="Stufe">
                    <span>
                        <button aria-label="Höher"><svg viewBox="0 0 6 4"><path d="M0 4l3-4 3 4z" /></svg></button>
                        <button aria-label="Niedriger"><svg viewBox="0 0 6 4"><path d="M0 0l3 4 3-4z" /></svg></button>
                    </span>
                </span>
                <input class="field part" type="text" aria-label="Teil">
                <button class="tool" aria-label="Teil wählen"><svg><use href="#foldmen" /></svg></button>
                <button class="tool" aria-label="Teil anzeigen"><svg><use href="#menbulb" /></svg></button>
            </div>

            <div class="stage">
                <!-- Werkzeugspalten -->
                <div class="palette main-tools">
                    <button class="tool" aria-label="Selektieren"><svg><use href="#cursor" /><use href="#tick" /></svg></button>
                    <button class="tool" aria-label="Körper"><svg><use href="#ball" /><use href="#tick" /></svg></button>
                    <button class="tool" aria-label="Flächen"><svg><use href="#ring" /><use href="#tick" /></svg></button>
                    <button class="tool" aria-label="Zeichnen"><svg><use href="#pencilo" /><use href="#tick" /></svg></button>
                    <button class="tool" aria-label="Bearbeiten"><svg><use href="#tools" /><use href="#tick" /></svg></button>
                    <button class="tool" aria-label="Transformieren"><svg><use href="#rotate" /><use href="#tick" /></svg></button>
                    <button class="tool" aria-label="Hilfslinien"><svg><use href="#pencilg" /><use href="#tick" /></svg></button>
                    <button class="tool" aria-label="Mittellinien"><svg><use href="#axis" /><use href="#tick" /></svg></button>
                    <button class="tool" aria-label="Bemaßung"><svg><use href="#dim" /><use href="#tick" /></svg></button>
                    <button class="tool" aria-label="Symbole"><svg><use href="#weld" /><use href="#tick" /></svg></button>
                    <button class="tool" aria-label="Text"><svg><use href="#text" /><use href="#tick" /></svg></button>
                    <button class="tool" aria-label="Schraffur"><svg><use href="#hatchb" /><use href="#tick" /></svg></button>
                    <button class="tool" aria-label="Information"><svg><use href="#info" /><use href="#tick" /></svg></button>
                    <button class="tool" aria-label="Löschen"><svg><use href="#eraser" /></svg></button>
                </div>
                <div class="palette body-tools">
                    <button class="tool" aria-label="Auswahl"><svg><use href="#cursorw" /></svg></button>
                    <hr>
                    <button class="tool" aria-label="Quader"><svg><use href="#cube" /></svg></button>
                    <button class="tool" aria-label="Zylinder"><svg><use href="#cyl" /></svg></button>
                    <button class="tool" aria-label="Kugel"><svg><use href="#ball" /></svg></button>
                    <button class="tool" aria-label="Torus"><svg><use href="#torus" /></svg></button>
                    <button class="tool" aria-label="Prisma"><svg><use href="#hexa" /></svg></button>
                    <hr>
                    <button class="tool" aria-label="Profilkörper"><svg><use href="#sweep" /></svg></button>
                    <button class="tool" aria-label="Rohr"><svg><use href="#pipe" /></svg></button>
                    <button class="tool" aria-label="Drehkörper"><svg><use href="#cut" /></svg></button>
                    <button class="tool" aria-label="Übergangskörper"><svg><use href="#loft" /></svg></button>
                    <hr>
                    <button class="tool" aria-label="Schale"><svg><use href="#shell" /></svg></button>
                    <hr>
                    <button class="tool" aria-label="Platte"><svg><use href="#slab" /></svg></button>
                    <hr>
                    <button class="tool" aria-label="Vereinigen"><svg><use href="#union" /></svg></button>
                    <button class="tool" aria-label="Abziehen"><svg><use href="#minus" /></svg></button>
                    <button class="tool" aria-label="Schnittmenge"><svg><use href="#inter" /></svg></button>
                    <button class="tool" aria-label="Hinzufügen"><svg><use href="#add" /></svg></button>
                </div>

                <!-- Zeichenfläche -->
                <div class="view">
                    <div class="canvas">
                        <svg class="scene" viewBox="514 102 1390 890" preserveAspectRatio="xMinYMin meet">
                            <defs>
                                <linearGradient id="tube" gradientUnits="userSpaceOnUse" x1="1620" y1="605" x2="1605" y2="714">
                                    <stop offset="0" stop-color="#ababab" /><stop offset="0.3" stop-color="#bdbdbd" /><stop offset="0.6" stop-color="#a6a6a6" /><stop offset="0.85" stop-color="#8c8c8c" /><stop offset="1" stop-color="#555" />
                                </linearGradient>
                                <linearGradient id="coneTop" gradientUnits="userSpaceOnUse" x1="1290" y1="480" x2="1240" y2="580">
                                    <stop offset="0" stop-color="#a6a6a6" /><stop offset="0.6" stop-color="#b4b4b4" /><stop offset="1" stop-color="#a9a9a9" />
                                </linearGradient>
                                <linearGradient id="coneSide" gradientUnits="userSpaceOnUse" x1="1040" y1="600" x2="1430" y2="640">
                                    <stop offset="0" stop-color="#a1a1a1" /><stop offset="0.6" stop-color="#a8a8a8" /><stop offset="1" stop-color="#adadad" />
                                </linearGradient>
                                <linearGradient id="glow" gradientUnits="userSpaceOnUse" x1="1200" y1="560" x2="1430" y2="600">
                                    <stop offset="0" stop-color="#c4c4c4" stop-opacity="0" /><stop offset="0.8" stop-color="#c4c4c4" stop-opacity=".8" /><stop offset="1" stop-color="#bcbcbc" stop-opacity=".8" />
                                </linearGradient>
                                <linearGradient id="under" x1="0" x2="0" y1="0" y2="1">
                                    <stop offset="0" stop-color="#8c8c8c" /><stop offset="1" stop-color="#484848" />
                                </linearGradient>
                                <linearGradient id="bore" x1="0" x2="0" y1="0" y2="1">
                                    <stop offset="0" stop-color="#7c7c7c" /><stop offset="0.5" stop-color="#aaa" /><stop offset="1" stop-color="#c4c4c4" />
                                </linearGradient>
                                <filter id="shadow" x="-10%" y="-10%" width="130%" height="130%"><feDropShadow dx="2" dy="5" stdDeviation="3" flood-opacity=".45" /></filter>
                            </defs>

                            <path class="space-line" d="M514 655l296-66M514 748l1044 143 346-78M1408 562l496 67" />

                            <path d="M1022 497l237-53v100l-52 155-192 43z" fill="#e2fcfc" stroke="#000" />

                            <!-- Körper -->
                            <path d="M816 483l196-45 226 31-197 45z" fill="#b1b1b1" />
                            <path d="M816 483l225 31-5 203-226-30z" fill="#9f9f9f" />
                            <path d="M1041 514l197-45 142 78 28 15c18 8 34 15 54 22-18 0-26 14-30 32z" fill="url(#coneTop)" />
                            <path d="M1041 514l197-45 142 78 28 15c18 8 34 15 54 22-18 0-26 14-30 32z" fill="url(#glow)" />
                            <path d="M1041 514l391 102c-6 18-6 36-1 53l-395 48z" fill="url(#coneSide)" />
                            <path d="M1190 700l241-31c4 12 8 19 17 22-80-2-170 2-230 9z" fill="url(#under)" />
                            <path d="M1462 584l335 45-9 107-340-46c-30-12-28-104 14-106z" fill="url(#tube)" />
                            <path d="M1022 497l162-36 54 8-197 45-5 203-19-3z" fill="#8fd0d0" fill-opacity=".4" />
                            <path class="edge" d="M816 483l196-45 226 31 142 78 28 15M816 483l225 31-5 203-226-30zM1041 514l197-45M1041 514l391 102M1036 717l395-48M1259 444v36M1018 714l4-217 237-53M1464 584c-26-2-38 36-36 60 0 22 8 44 22 46" />
                            <ellipse cx="1792" cy="683" rx="29" ry="54" fill="#8f8f8f" stroke="#000" transform="rotate(5 1792 683)" />
                            <ellipse cx="1792" cy="683" rx="21" ry="38" fill="url(#bore)" stroke="#000" transform="rotate(5 1792 683)" />
                            <path class="space-line" d="M1580 102l-22 789" />

                            <path class="axis" d="M1028 402l-2 75M1020 715v41M883 610l41-10M1461 510l-2 73M1456 691l-2 75M1386 653l41-9M1795 556l-6 253M1721 699l141-32M1773 680l81 11" />

                            <!-- Hinweis auf das Werkzeug -->
                            <g filter="url(#shadow)">
                                <ellipse cx="501" cy="340" rx="25" ry="20" fill="none" stroke="#e0484a" stroke-width="3" />
                                <path d="M526 345l556 204 4-10 22 25-34 4 4-9-556-205z" fill="#fb4343" />
                            </g>
                        </svg>
                    </div>
                    <div class="vscroll">
                        <svg><use href="#arrow" /></svg>
                        <div class="track"><div class="thumb"></div></div>
                        <svg class="flip"><use href="#arrow" /></svg>
                    </div>
                    <div class="hscroll">
                        <svg class="left"><use href="#arrow" /></svg>
                        <div class="track"><div class="thumb"></div></div>
                        <svg class="right"><use href="#arrow" /></svg>
                    </div>
                </div>
            </div>
        </section>
    </div>

    <!-- Statuszeile -->
    <footer class="statusbar">
        <span class="command">Übergangskörper</span>
        <span class="message">Selektieren Sie Kontur begrenzende 2D-Linien, eine 2D-Fläche oder eine ebene Körperfläche.</span>
        <span class="logo">
            <svg viewBox="0 0 64 29"><path d="M2 15C4 5 24 1 40 1c14 0 18 6 12 11-10 2-18 4-20 8l-6 7C12 27 1 23 2 15z" fill="#e2062c" /></svg>
            <b>Data</b><b class="solid">Solid</b>
        </span>
    </footer>
</body>

</html>
```
FILE: styles.css
```css
* {
    margin: 0;
    padding: 0;
    box-sizing: border-box;
}

body {
    display: flex;
    flex-direction: column;
    height: 100vh;
    overflow: hidden;
    background-color: #f0f0f0;
    color: #000;
    font-family: Roboto, "Open Sans", sans-serif;
    font-size: 12px;
    line-height: 16px;
}

button,
input,
select {
    font: inherit;
    color: inherit;
    border: none;
    background: none;
}

svg {
    display: block;
    flex: none;
}

.symbols {
    position: absolute;
    width: 0;
    height: 0;
}

/* Titelleiste */
.titlebar {
    display: flex;
    align-items: center;
    height: 24px;
    padding-left: 2px;
    background-color: #fff;
}

.titlebar h1 {
    margin-left: 4px;
    font-size: 12px;
    font-weight: normal;
}

.brand {
    width: 17px;
    height: 12px;
}

.window-buttons {
    display: flex;
    margin: 0 2px 0 auto;
}

.window-buttons button {
    width: 46px;
    height: 20px;
}

.window-buttons svg {
    width: 12px;
    height: 12px;
    margin: 0 auto;
    fill: none;
    stroke: #000;
}

/* Menü */
.menubar {
    display: flex;
    align-items: center;
    gap: 14px;
    height: 17px;
    padding: 0 1px 0 6px;
    background-color: #fff;
}

.menubar .brand {
    margin-right: -7px;
}

.menubar a {
    color: #000;
    text-decoration: none;
}

.mdi-buttons {
    display: flex;
    gap: 2px;
    margin-left: auto;
}

.mdi-buttons button {
    width: 17px;
    height: 17px;
    border: 1px solid #dfe6ea;
}

.mdi-buttons svg {
    width: 9px;
    height: 9px;
    margin: 0 auto;
    fill: none;
    stroke: #6b7780;
    stroke-width: 2;
}

/* Symbolleisten */
.toolbar {
    display: flex;
    align-items: center;
    gap: 2px;
    height: 31px;
    padding-left: 3px;
    border-bottom: 1px solid #a0a0a0;
}

.tool {
    position: relative;
    flex: none;
    width: 22px;
    height: 22px;
}

.tool svg {
    width: 100%;
    height: 100%;
}

.tool.wide {
    width: 48px;
}

.tool.black {
    background-color: #000;
}

.tool.grey {
    background-color: #bcbcbc;
}

.tool.dim b {
    position: absolute;
    left: 0;
    right: 0;
    top: 4px;
    font-family: "Liberation Sans", sans-serif;
    font-size: 13px;
    text-align: center;
}

.drop {
    width: 8px;
    height: 22px;
}

.drop svg {
    width: 8px;
    height: 22px;
}

.drop.small,
.drop.small svg {
    width: 6px;
}

.drop.off {
    fill: #888;
}

.sep {
    width: 1px;
    height: 24px;
    background-color: #8c8c8c;
}

.spaced {
    margin-left: 3px;
}

.star {
    width: 12px;
    height: 22px;
}

.combo {
    position: relative;
    height: 23px;
}

.combo select {
    appearance: none;
    width: 100%;
    height: 23px;
    padding-left: 3px;
    border: 1px solid #a8a8a8;
    background-color: #e1e1e1;
}

.combo svg {
    position: absolute;
    right: 4px;
    top: 7px;
    width: 10px;
    height: 10px;
    pointer-events: none;
}

.selection {
    width: 139px;
}

.coords {
    width: 81px;
}

.plane {
    width: 110px;
}

.line-type {
    width: 76px;
}

.line-type select {
    background-color: #fff;
    border-color: #7a7a7a;
}

.line-type i {
    position: absolute;
    left: 4px;
    top: 10px;
    width: 48px;
    height: 2px;
    background-color: #000;
    pointer-events: none;
}

.field {
    height: 24px;
    padding-left: 5px;
    border: 1px solid #7a7a7a;
    background-color: #fff;
}

.layer-name {
    width: 118px;
}

.line-width {
    width: 58px;
}

.group {
    width: 108px;
}

.part {
    width: 90px;
    margin-left: 5px;
}

.spin {
    display: flex;
}

.spin .field {
    width: 30px;
    padding-left: 3px;
    border-right: none;
    font-size: 13px;
    font-weight: bold;
}

.spin span {
    display: flex;
    flex-direction: column;
    gap: 2px;
    padding-top: 1px;
}

.spin button {
    width: 16px;
    height: 10px;
    border: 1px solid #a8a8a8;
}

.spin button svg {
    width: 6px;
    height: 4px;
    margin: 0 auto;
}

/* Arbeitsbereich */
.workspace {
    display: flex;
    flex: 1;
    min-height: 0;
}

.side {
    display: flex;
    flex-direction: column;
    flex: none;
    width: 455px;
    padding-bottom: 6px;
    border-right: 1px solid #808080;
}

.grip {
    display: flex;
    align-items: center;
    height: 20px;
    padding: 2px 6px 0 6px;
}

.grip span {
    width: 418px;
    height: 5px;
    border: 1px solid #a0a0a0;
    border-left: none;
}

.grip button {
    margin-left: 7px;
}

.grip svg {
    width: 8px;
    height: 8px;
}

.grip .dock {
    width: 4px;
}

.filters {
    display: flex;
    gap: 2px;
    height: 27px;
    padding: 1px 0 0 8px;
    border-bottom: 1px solid #a0a0a0;
}

.panel {
    display: flex;
    flex-direction: column;
    flex: 1;
    min-height: 0;
    width: 444px;
    margin: 1px 0 0 5px;
    padding: 0 4px 4px 4px;
    border: 1px solid #696969;
}

.tabs {
    display: flex;
    align-items: flex-end;
    height: 22px;
    margin-left: -2px;
}

.tab {
    display: flex;
    align-items: center;
    gap: 6px;
    width: 64px;
    height: 19px;
    padding-left: 6px;
    border: 1px solid #d9d9d9;
    border-bottom: none;
}

.tab svg {
    width: 14px;
    height: 14px;
}

.tab.active {
    height: 21px;
    padding-left: 9px;
    margin-bottom: 1px;
    background-color: #fff;
    border-color: #fff;
}

.panes {
    display: flex;
    flex-direction: column;
    flex: 1;
    min-height: 0;
    padding-top: 1px;
    background-color: #fff;
}

.tree {
    position: relative;
    flex: 314 1 0;
    border: 1px solid #696969;
}

.tree-item {
    display: flex;
    align-items: center;
    gap: 6px;
    height: 18px;
    padding-left: 23px;
    background-color: #d9d9d9;
}

.tree-item svg {
    width: 14px;
    height: 14px;
}

/* Statusfenster */
.status-window {
    position: absolute;
    left: 47px;
    top: 23px;
    width: 241px;
    height: 273px;
    display: flex;
    flex-direction: column;
    background-color: #f0f0f0;
    box-shadow: 0 1px 8px rgba(0, 0, 0, 0.4);
}

.status-title {
    display: flex;
    align-items: center;
    justify-content: space-between;
    height: 31px;
    padding: 0 1px 0 8px;
    background-color: #fff;
    color: #8f8f8f;
}

.status-title button {
    width: 19px;
    height: 19px;
    margin-top: 4px;
    background-color: #e1e1e1;
}

.status-body {
    display: flex;
    flex: 1;
}

.status-names {
    width: 126px;
    border-right: 2px solid #808080;
}

.status-values {
    display: flex;
    flex-direction: column;
    margin-left: 9px;
}

.status-values input {
    width: 106px;
    height: 20px;
    border: 1px solid #7a7a7a;
    background-color: #fff;
}

.status-values input:nth-child(3),
.status-values input:nth-child(6),
.status-values input:nth-child(10) {
    margin-top: 1px;
}

/* Folienliste */
.layer-list {
    display: flex;
    flex: 315 1 0;
    min-height: 0;
    margin-top: 6px;
    border: 1px solid #696969;
}

.layer-scroll {
    flex: 1;
    overflow: hidden;
}

.layer-list table {
    width: 270px;
    table-layout: fixed;
    border-collapse: collapse;
}

.layer-list th {
    position: relative;
    width: 34px;
    height: 24px;
    padding-left: 6px;
    border-right: 1px solid #e0e0e0;
    font-weight: normal;
    text-align: left;
}

.layer-list th:last-child {
    border-right: none;
}

.layer-list th.name {
    width: 100px;
}

.layer-list th svg {
    position: absolute;
    left: 46px;
    top: -2px;
    width: 8px;
    height: 8px;
}

.layer-list td {
    height: 19px;
    line-height: 18px;
    white-space: nowrap;
}

.layer-list td:first-child {
    padding-left: 5px;
    background-color: #f7f7f7;
}

.layer-list td:nth-child(4) {
    padding-left: 6px;
}

.layer-list td.black,
.layer-list td.purple,
.layer-list td.green,
.layer-list td.navy,
.layer-list td.blue {
    background: linear-gradient(currentColor, currentColor) 0 0 / 16px 16px no-repeat;
}

td.black {
    color: #000;
}

td.purple {
    color: #b400b4;
}

td.green {
    color: #00ff00;
}

td.navy {
    color: #0000b4;
}

td.blue {
    color: #0000ff;
}

.ico {
    float: left;
    width: 14px;
    height: 14px;
    margin: 1px 3px 0 0;
}

.ln {
    width: 16px;
    height: 4px;
    margin-bottom: 3px;
}

.st {
    width: 14px;
    height: 12px;
    margin: 0 0 3px 2px;
}

/* Bildlaufleisten */
.vscroll {
    display: flex;
    flex-direction: column;
    align-items: center;
    flex: none;
    width: 16px;
    background-color: #f0f0f0;
}

.vscroll svg,
.hscroll svg {
    width: 8px;
    height: 8px;
    margin: 5px 4px;
}

.track {
    flex: 1;
}

.vscroll .track {
    width: 100%;
}

.hscroll {
    display: flex;
    align-items: center;
    height: 16px;
    background-color: #f0f0f0;
}

.hscroll .track,
.hscroll .thumb {
    height: 16px;
}

.thumb {
    background-color: #cdcdcd;
}

.flip {
    transform: rotate(180deg);
}

.left {
    transform: rotate(-90deg);
}

.right {
    transform: rotate(90deg);
}

.layer-list .thumb {
    height: 62%;
}

.mini-bar {
    display: flex;
    gap: 4px;
    height: 29px;
    margin-top: 6px;
    padding: 3px 0 0 3px;
    border-bottom: 1px solid #a0a0a0;
    background-color: #f0f0f0;
}

.output {
    display: flex;
    flex-direction: column;
    flex: 182 1 0;
    margin-top: 1px;
    border: 1px solid #696969;
}

.output-text {
    flex: 1;
    border-left: 16px solid #f0f0f0;
}

.output .thumb {
    width: 20%;
}

/* Dokument */
.document {
    display: flex;
    flex-direction: column;
    flex: 1;
    min-width: 0;
}

.view-bar {
    height: 30px;
    padding-left: 2px;
}

.stage {
    display: flex;
    flex: 1;
    min-height: 0;
}

.palette {
    display: flex;
    flex-direction: column;
    align-items: center;
    width: 29px;
    border-right: 1px solid #a0a0a0;
}

.main-tools .tool {
    height: 28px;
    padding: 3px 0 2px;
    border-bottom: 1px solid #808080;
}

.main-tools .tool:last-child {
    border-bottom: none;
}

.body-tools {
    width: 30px;
    padding-top: 2px;
}

.body-tools .tool {
    height: 24px;
    padding: 1px 0;
}

.body-tools hr {
    width: 22px;
    height: 1px;
    margin: 1px 0 2px;
    border: none;
    background-color: #808080;
}

/* Zeichenfläche */
.view {
    display: grid;
    grid-template-columns: 1fr 16px;
    grid-template-rows: 1fr 16px;
    flex: 1;
    min-width: 0;
}

.canvas {
    min-width: 0;
    min-height: 0;
    background-color: #fff;
}

.scene {
    position: relative;
    z-index: 2;
    width: 100%;
    height: 100%;
    overflow: visible;
    pointer-events: none;
}

.space-line {
    fill: none;
    stroke: #bdbdbd;
}

.edge {
    fill: none;
    stroke: #000;
}

.axis {
    fill: none;
    stroke: #1c1c9c;
    stroke-dasharray: 9 3 2 3;
}

.view .vscroll .track {
    display: grid;
    grid-template-rows: 422fr 280fr 156fr;
}

.view .vscroll .thumb {
    grid-row: 2;
}

.view .hscroll .track {
    display: grid;
    grid-template-columns: 414fr 446fr 496fr;
}

.view .hscroll .thumb {
    grid-column: 2;
}

/* Statuszeile */
.statusbar {
    display: flex;
    align-items: center;
    gap: 3px;
    height: 32px;
    border-top: 1px solid #a0a0a0;
}

.statusbar > span {
    height: 19px;
    border: 1px solid #a0a0a0;
    border-right-color: #fff;
    border-bottom-color: #fff;
}

.command {
    width: 198px;
    padding-left: 1px;
}

.message {
    flex: 1;
    padding-left: 1px;
}

.statusbar > .logo {
    position: relative;
    width: 64px;
    height: 29px;
    margin-left: 303px;
    border: none;
    background-color: #dcdfe4;
}

.logo b {
    position: absolute;
    left: 12px;
    top: 5px;
    color: #fff;
    font-family: "DejaVu Sans", sans-serif;
    font-size: 11px;
    line-height: 11px;
}

.logo .solid {
    left: 24px;
    top: 16px;
    color: #000;
    font-style: italic;
}
```
